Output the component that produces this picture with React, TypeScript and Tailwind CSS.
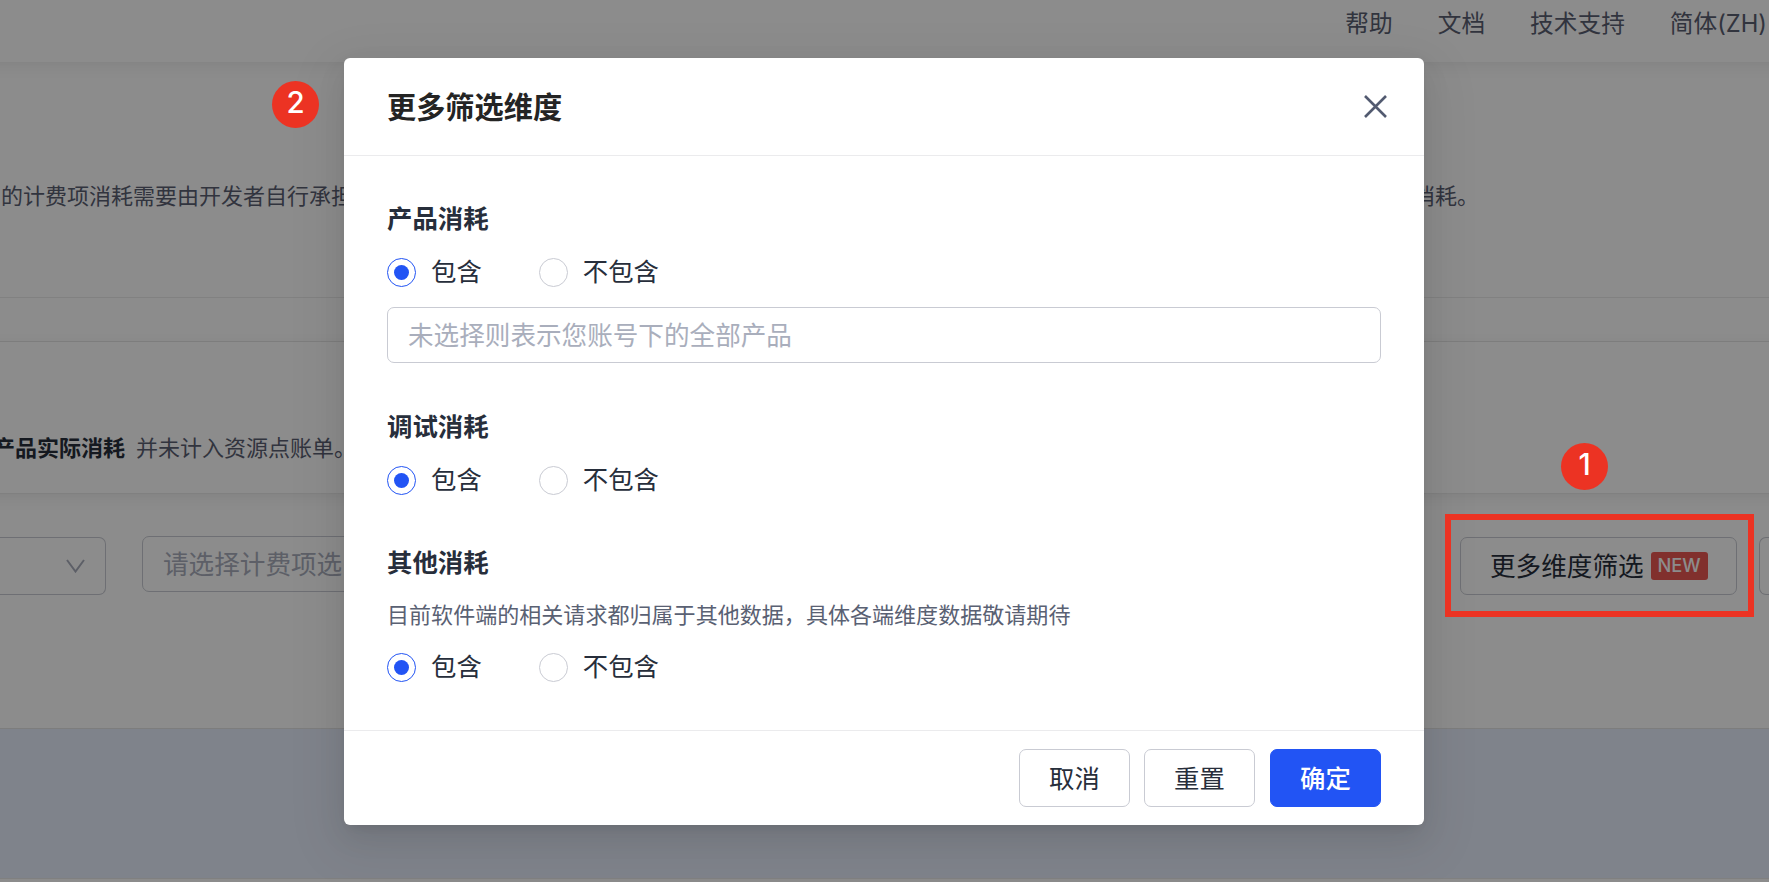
import React from 'react'
import clsx from 'clsx'

const navLinks = ['帮助', '文档', '技术支持', '简体(ZH)']

const sections = [
  {
    title: '产品消耗',
    className: 'h-[208px]',
    placeholder: '未选择则表示您账号下的全部产品',
  },
  {
    title: '调试消耗',
    className: 'h-[136px]',
  },
  {
    title: '其他消耗',
    className: 'h-[140px]',
    description: '目前软件端的相关请求都归属于其他数据，具体各端维度数据敬请期待',
  },
]

const Radio: React.FC<{
  checked?: boolean;
  children: React.ReactNode;
}> = ({ checked = false, children }) => (
  <label className="flex items-center gap-[15px]">
    <span
      className={clsx(
        'flex size-[29px] items-center justify-center rounded-full border',
        checked ? 'border-[#2254f4]' : 'border-[#c9cbd3]',
      )}
    >
      {checked && <span className="size-[15px] rounded-full bg-[#2254f4]" />}
    </span>
    <span className="leading-[30px]">{children}</span>
  </label>
)

const Section: React.FC<{
  title: string;
  className: string;
  description?: string;
  placeholder?: string;
}> = ({ title, className, description, placeholder }) => (
  <section className={className}>
    <h3 className="h-[30px] font-bold leading-[30px]">{title}</h3>
    {description && (
      <p className="mt-[23px] h-[30px] text-[22.05px] leading-[30px] text-[#5a6173]">{description}</p>
    )}
    <div className={clsx('flex h-[30px] items-center gap-[57px]', description ? 'mt-[21px]' : 'mt-[23px]')}>
      <Radio checked>包含</Radio>
      <Radio>不包含</Radio>
    </div>
    {placeholder && (
      <div className="mt-[20px] flex h-[56px] items-center rounded-[7px] border border-[#c9cbd3] pl-5 pt-[2px] text-[25.6px] text-[#a9aebc]">
        {placeholder}
      </div>
    )}
  </section>
)

const ModalButton: React.FC<{
  primary?: boolean;
  children: React.ReactNode;
}> = ({ primary = false, children }) => (
  <button
    className={clsx(
      'h-[58px] w-[111px] rounded-[7px] border pt-[2px]',
      primary ? 'ml-px border-[#2254f4] bg-[#2254f4] font-medium text-white' : 'border-[#c9cbd3]',
    )}
  >
    {children}
  </button>
)

const Modal = () => (
  <div className="flex h-[767px] w-[1080px] flex-col rounded-[6px] bg-white shadow-[0_11px_29px_rgba(0,0,0,0.08),0_6px_11px_-7px_rgba(0,0,0,0.12),0_16px_51px_15px_rgba(0,0,0,0.05)]">
    <header className="flex h-[98px] items-center justify-between border-b border-[#ebebed] pl-[43px] pr-[37px]">
      <h2 className="pt-[4px] text-[29.2px] font-bold text-[#242424]">更多筛选维度</h2>
      <svg className="size-[23px]" viewBox="0 0 23 23" fill="none" stroke="#525a70" strokeWidth="2.6">
        <path d="M1 1L22 22M22 1L1 22" />
      </svg>
    </header>
    <div className="flex-1 px-[43px] pt-[48px]">
      {sections.map((section) => (
        <Section key={section.title} {...section} />
      ))}
    </div>
    <footer className="flex h-[95px] items-center justify-end border-t border-[#ebebed] px-[43px]">
      <div className="flex gap-[14px]">
        <ModalButton>取消</ModalButton>
        <ModalButton>重置</ModalButton>
        <ModalButton primary>确定</ModalButton>
      </div>
    </footer>
  </div>
)

const Page = () => (
  <div className="flex h-full flex-col bg-white text-[#5a6072]">
    <nav className="z-10 -mx-8 flex h-[62px] shrink-0 justify-end gap-[45px] pr-[34px] pt-[4px] font-[Inter,'Noto_Sans_CJK_SC',sans-serif] text-[23.7px] leading-[40px] shadow-[0_4px_15px_rgba(0,0,0,0.07)]">
      {navLinks.map((link) => (
        <a key={link} href="#">{link}</a>
      ))}
    </nav>
    <div className="flex h-[236px] shrink-0 justify-between border-b border-[#ececec] pl-[1px] pr-[290px] pt-[115px] text-[22px] leading-[40px]">
      <p>的计费项消耗需要由开发者自行承担</p>
      <p>消耗。</p>
    </div>
    <div className="h-[44px] shrink-0 border-b border-[#e9e9e9]" />
    <div className="z-10 -mx-8 flex h-[152px] shrink-0 items-start border-b border-[#e9e9e9] pl-[25px] pt-[87px] text-[22px] leading-[40px] shadow-[0_4px_15px_rgba(0,0,0,0.07)]">
      <strong className="mr-[11px] text-[#272e3b]">产品实际消耗</strong>
      <span>并未计入资源点账单。</span>
    </div>
    <div className="flex h-[235px] shrink-0 items-start border-b border-[#e3e3e3] pt-[43px] text-[25.6px]">
      <div className="flex h-[58px] w-[106px] items-center justify-end rounded-r-[7px] border border-l-0 border-[#c9cbd3] pr-[20px]">
        <svg className="h-[14px] w-[19px]" viewBox="0 0 19 14" fill="none" stroke="#a9aebc" strokeWidth="2">
          <path d="M1 1L9.5 12.5L18 1" />
        </svg>
      </div>
      <div className="-mt-px ml-9 flex h-[56px] w-[400px] items-center rounded-[7px] border border-[#c9cbd3] pl-[20px] pt-[2px] text-[#a9aebc]">
        请选择计费项选
      </div>
      <button className="ml-auto flex h-[58px] w-[277px] items-center rounded-[7px] border border-[#c9cbd3] pl-[29px] text-[#272e3b]">
        <span className="pt-[2px]">更多维度筛选</span>
        <span className="ml-[7px] flex h-[28px] w-[57px] items-center justify-center rounded-[3px] bg-[#eb5852] font-[Inter] text-[18.3px] font-medium text-white">
          NEW
        </span>
      </button>
      <div className="ml-[22px] h-[58px] w-[10px] rounded-l-[7px] border border-r-0 border-[#c9cbd3]" />
    </div>
    <div className="h-[149px] shrink-0 bg-[#e7eefd]" />
    <div className="flex-1 border-t border-[#e9e9e9]" />
  </div>
)

const Marker: React.FC<{
  className: string;
  children: React.ReactNode;
}> = ({ className, children }) => (
  <span
    className={clsx(
      'absolute flex size-[47px] items-center justify-center rounded-full bg-[#ec3323] pb-[3px]',
      'font-[Inter] text-[29.5px] font-medium leading-none text-white',
      className,
    )}
  >
    {children}
  </span>
)

const App = () => (
  <div className="relative h-[882px] w-[1769px] overflow-hidden font-['Liberation_Sans','Noto_Sans_CJK_SC',sans-serif]">
    <Page />
    <div className="absolute inset-0 z-20 bg-black/45 pl-[344px] pt-[58px] text-[25.4px] text-[#272e3b]">
      <Modal />
    </div>
    <div className="absolute left-[1445px] top-[514px] z-30 h-[103px] w-[309px] border-[6px] border-[#ec3323]" />
    <Marker className="left-[1561px] top-[443px] z-30">1</Marker>
    <Marker className="left-[272px] top-[81px] z-30">2</Marker>
  </div>
)

export default App
